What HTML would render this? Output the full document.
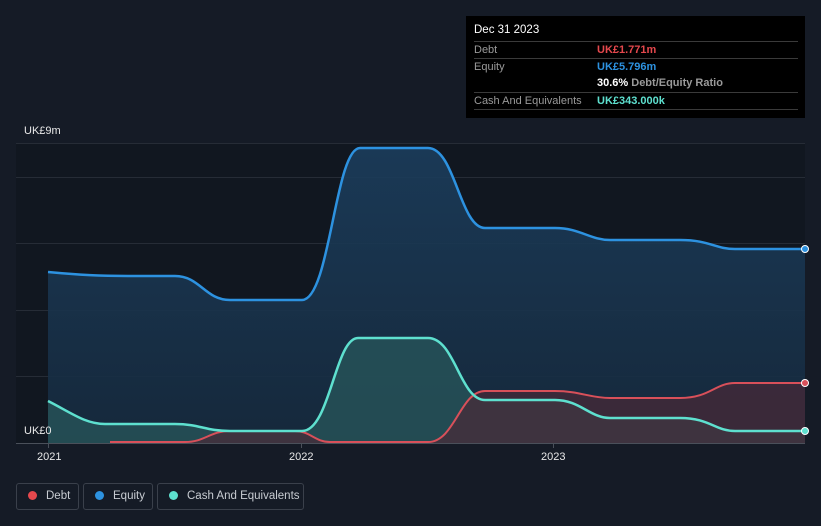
<!DOCTYPE html>
<html><head><style>
body{margin:0;width:821px;height:526px;background:#151b26;font-family:"Liberation Sans",sans-serif;overflow:hidden;position:relative}
.tt{position:absolute;left:466px;top:16px;width:339px;height:102px;background:#000;color:#fff;font-size:11px}
.tt .r{position:absolute;left:8px;width:324px;border-top:1px solid #3a3a3a;height:17px;line-height:17px;color:#9a9a9a}
.tt .v{position:absolute;left:123px;font-weight:bold}
.lg{position:absolute;top:483px;height:27px;border:1px solid #3a404b;border-radius:3px;color:#c8ccd2;font-size:11.5px;line-height:25px;box-sizing:border-box;white-space:nowrap}
.dot{display:inline-block;width:9px;height:9px;border-radius:50%;margin:0 9px 0 11px;vertical-align:-1px}
.ax{position:absolute;color:#e8e8e8;font-size:11px}
</style></head><body>
<div class="tt">
<div style="position:absolute;left:8px;top:8px;font-size:11.5px">Dec 31 2023</div>
<div class="r" style="top:25px">Debt<span class="v" style="color:#e5484d">UK£1.771m</span></div>
<div class="r" style="top:42px">Equity<span class="v" style="color:#2d92e0">UK£5.796m</span></div>
<div class="r" style="top:59px;border-top:none"><span class="v" style="color:#fff">30.6% <span style="color:#9a9a9a;font-weight:bold">Debt/Equity Ratio</span></span></div>
<div class="r" style="top:76px">Cash And Equivalents<span class="v" style="color:#5ee0cf">UK£343.000k</span></div>
<div class="r" style="top:93px;height:0"></div>
</div>
<svg width="821" height="526" style="position:absolute;left:0;top:0">
<defs>
<linearGradient id="eq" x1="0" y1="0" x2="0" y2="1"><stop offset="0" stop-color="#1b3d5c"/><stop offset="1" stop-color="#162a3e"/></linearGradient>
</defs>
<rect x="16" y="143" width="789" height="300" fill="#111720"/>
<g stroke="#262c36" stroke-width="1">
<line x1="16" y1="143.5" x2="805" y2="143.5"/><line x1="16" y1="177.5" x2="805" y2="177.5"/><line x1="16" y1="243.5" x2="805" y2="243.5"/><line x1="16" y1="310.5" x2="805" y2="310.5"/><line x1="16" y1="376.5" x2="805" y2="376.5"/>
</g>
<path d="M48 272 C80 275,100 276,130 276 L175 276 C200 276,205 300,230 300 L302 300 C330 300,335 148,360 148 L428 148 C455 148,460 228,485 228 L555 228 C580 228,590 240,610 240 L680 240 C710 240,715 249,735 249 L805 249 L805 443 L48 443Z" fill="url(#eq)" opacity="0.9"/>
<path d="M48 401 C70 412,85 424,105 424 L175 424 C200 424,205 431,230 431 L302 431 C330 431,335 338,358 338 L428 338 C455 338,460 400,485 400 L555 400 C580 400,590 418,610 418 L680 418 C710 418,715 431,735 431 L805 431 L805 443 L48 443Z" fill="#2a5a5c" opacity="0.7"/>
<path d="M110 442 L185 442 C205 442,210 431,230 431 L295 431 C310 431,315 442,330 442 L428 442 C455 442,460 391,485 391 L555 391 C580 391,590 398,610 398 L680 398 C710 398,715 383,735 383 L805 383 L805 443 L110 443Z" fill="#4a2a38" opacity="0.7"/>
<path d="M48 272 C80 275,100 276,130 276 L175 276 C200 276,205 300,230 300 L302 300 C330 300,335 148,360 148 L428 148 C455 148,460 228,485 228 L555 228 C580 228,590 240,610 240 L680 240 C710 240,715 249,735 249 L805 249" fill="none" stroke="#2d92e0" stroke-width="2.5"/>
<path d="M110 442 L185 442 C205 442,210 431,230 431 L295 431 C310 431,315 442,330 442 L428 442 C455 442,460 391,485 391 L555 391 C580 391,590 398,610 398 L680 398 C710 398,715 383,735 383 L805 383" fill="none" stroke="#d8505a" stroke-width="2"/>
<path d="M48 401 C70 412,85 424,105 424 L175 424 C200 424,205 431,230 431 L302 431 C330 431,335 338,358 338 L428 338 C455 338,460 400,485 400 L555 400 C580 400,590 418,610 418 L680 418 C710 418,715 431,735 431 L805 431" fill="none" stroke="#5ee0cf" stroke-width="2.5"/>
<line x1="16" y1="443.5" x2="805" y2="443.5" stroke="#4a505a"/>
<g stroke="#4a505a"><line x1="48.5" y1="443" x2="48.5" y2="448"/><line x1="301.5" y1="443" x2="301.5" y2="448"/><line x1="553.5" y1="443" x2="553.5" y2="448"/></g>
<circle cx="805" cy="249" r="3.5" fill="#2d92e0" stroke="#fff" stroke-width="1"/>
<circle cx="805" cy="383" r="3.5" fill="#d8505a" stroke="#fff" stroke-width="1"/>
<circle cx="805" cy="431" r="3.5" fill="#5ee0cf" stroke="#fff" stroke-width="1"/>
</svg>
<div class="ax" style="left:24px;top:125px">UK£9m</div>
<div class="ax" style="left:24px;top:425px">UK£0</div>
<div class="ax" style="left:37px;top:451px">2021</div>
<div class="ax" style="left:289px;top:451px">2022</div>
<div class="ax" style="left:541px;top:451px">2023</div>
<div class="lg" style="left:16px;width:63px"><span class="dot" style="background:#e5484d"></span>Debt</div>
<div class="lg" style="left:83px;width:70px"><span class="dot" style="background:#2d92e0"></span>Equity</div>
<div class="lg" style="left:157px;width:147px"><span class="dot" style="background:#5ee0cf"></span>Cash And Equivalents</div>
</body></html>
